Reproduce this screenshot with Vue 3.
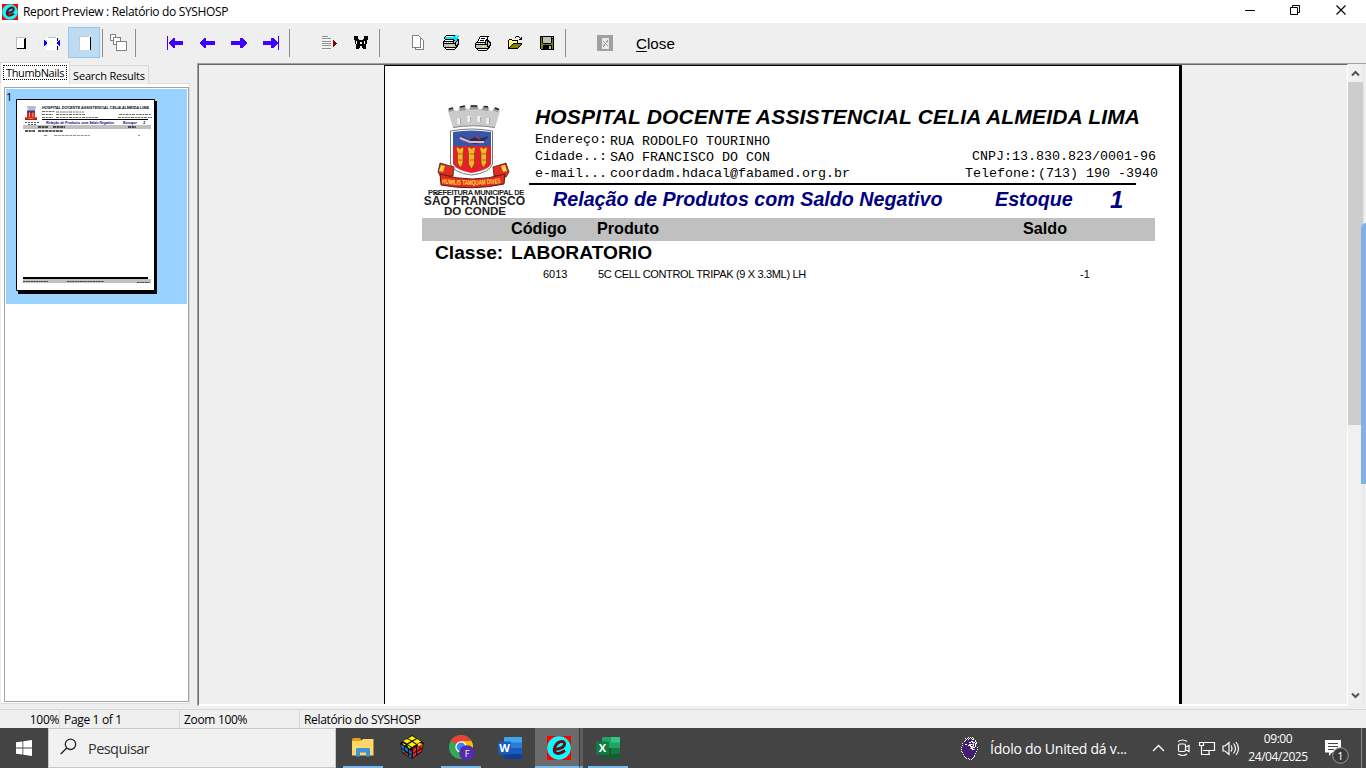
<script setup>
const palette = {
  k: '#000000', w: '#ffffff', g: '#c0c0c0', y: '#ffff00', o: '#808000',
  c: '#00e5ff', p: '#43206b', m: '#b9a8cf'
}

function pixels(rows) {
  const out = []
  rows.forEach((row, y) => {
    let x = 0
    while (x < row.length) {
      const ch = row[x]
      let n = 1
      while (row[x + n] === ch) n++
      if (ch !== '.') out.push({ x, y, w: n, fill: palette[ch] })
      x += n
    }
  })
  return out
}

const printer = pixels([
  '.....kkkkkkkkk..',
  '....kwwwwwwwk...',
  '....kwkkkkwwk...',
  '...kwwwwwwwkk...',
  '...kwkkkkwkkkk..',
  '..kwwwwwwwkgkkk.',
  '.kkkkkkkkkkgkgkk',
  'kgwgwgwgwgkgkggk',
  'kkkkkkkkkkkkkggk',
  'kgggggggggggkgkk',
  'kggggggyyyggkkk.',
  'kggggggggggggkk.',
  '.kkkkkkkkkkkkk..',
  '..kwwwwwwwwwk...',
  '...kkkkkkkkk....'
])
const printerSetup = pixels([
  '...kkkkkkkkkcc.c',
  '..kwwwwwwwccc.cc',
  '.kccccccccccccc.',
  '.kccccccccccccc.',
  '..kkkkkkkkkccckk',
  '.kwwwwwwwwkkcckk',
  'kkkkkkkkkkkgckgk',
  'kgwgwgwgwgkgkggk',
  'kkkkkkkkkkkkkggk',
  'kgggggggggggkgkk',
  'kggggggyyyggkkk.',
  'kggggggggggggkk.',
  '.kkkkkkkkkkkkk..',
  '..kwwwwwwwwwk...',
  '...kkkkkkkkk....'
])
const folder = pixels([
  '........kkk...',
  '.......k...k.k',
  '............kk',
  '.kkk.......kkk',
  'kywykkkkkk....',
  'kwywywywyk....',
  'kywywywywk....',
  'kwywykkkkkkkkk',
  'kywykooooooook',
  'kwykooooooook.',
  'kykooooooook..',
  'kkooooooook...',
  'kkkkkkkkkk....'
])
const floppy = pixels([
  'kkkkkkkkkkkkkk',
  'kokggggggggkgk',
  'kokggggggggkkk',
  'kokggggggggkok',
  'kokggggggggkok',
  'kokggggggggkok',
  'kokggggggggkok',
  'kookkkkkkkkook',
  'kooooooooooook',
  'kookkkkkkkkkok',
  'kookkkkkkggkok',
  'kookkkkkkggkok',
  'kookkkkkkggkok',
  '.kkkkkkkkkkkkk'
])
const binoculars = pixels([
  'kkkk......kkkk',
  'kkkk......kkkk',
  'kkkk......kkkk',
  'kkkkk....kkkkk',
  '.kkkkkkkkkkkk.',
  '.kwkkkkkkkwkk.',
  '.kwkkkwwkkwkk.',
  '.kwkkkwwkkwkk.',
  '..kkkkkkkkkk..',
  '..kkkkkkkkkk..',
  '..kkkk..kkkk..',
  '..kkkk..kkkk..',
  '..kkk....kkk..'
])
const lion = pixels([
  '.......w.w.w......',
  '....w.wpwpwpw.....',
  '.....wpwpppww.....',
  '....wpppppppppw...',
  '...wppppppwwppw...',
  '...pppppwwpwwwpw..',
  '.wppppppppppmpww..',
  '..ppwwppwwwmwpw...',
  '.wpppppwwwppwpw...',
  '.ppppppppwwwmpw...',
  'wpppppppppwmwwppw.',
  '.ppppppppmwwppp...',
  'wppppppppppwwmppw.',
  '.ppppppppppppppp..',
  'wppppppppppppppw..',
  '.wppppppppppppp...',
  '..ppppppppppppw...',
  '..wppppppppppp....',
  '...ppppppppppw....',
  '...wpppppppppw....',
  '....wpppppppw.....',
  '.....w.wpp.w......',
  '........w.w.......'
])

const contacts = [
  { label: 'Endereço:', value: 'RUA RODOLFO TOURINHO', rlabel: '', rvalue: '', kind: 'address' },
  { label: 'Cidade..:', value: 'SAO FRANCISCO DO CON', rlabel: 'CNPJ:', rvalue: '13.830.823/0001-96', kind: 'city' },
  { label: 'e-mail...', value: 'coordadm.hdacal@fabamed.org.br', rlabel: 'Telefone:', rvalue: '(713) 190 -3940', kind: 'mail' }
]
</script>

<template>
  <div class="screen">
    <header class="titlebar">
      <svg class="app-logo" width="16" height="16" viewBox="0 0 24 24">
        <rect width="24" height="24" fill="#f00" />
        <circle cx="12" cy="12" r="11.8" fill="#0ff" />
        <path d="M7 13C12 14 18 11 17.500 7.500C17 4 10.500 5 8 10.500C5.500 17 10 20 18 14.500" fill="none" stroke="#6b0c16" stroke-width="3.200" />
      </svg>
      <span class="title">Report Preview : Relatório do SYSHOSP</span>
      <svg class="win-buttons" width="106" height="16" viewBox="0 0 106 16">
        <path d="M0 8.500H10" stroke="#000" />
        <path d="M45.500 5.500H52.500V12.500H45.500ZM47.500 5V3.500H54.500V10.500H53" fill="none" stroke="#000" />
        <path d="M91.500 3.500L100.500 12.500M100.500 3.500L91.500 12.500" stroke="#000" stroke-width="1.100" />
      </svg>
    </header>

    <div class="toolbar">
      <div class="group first">
        <svg class="btn" viewBox="0 0 32 31"><path d="M12 10h9v12h-9z" fill="#c0c0c0" /><path d="M13 11h7v10h-7z" fill="#fff" /><path d="M20 12h1h0h1h-1v9h-8v1h8h1v-11h-1v10z" fill="#000" /><path d="M20 12h1v10h-8v-1h7zM21 12h1v10h-1z" fill="#000" /></svg>
        <svg class="btn" viewBox="0 0 32 31"><path d="M10 10h12v13h-12z" fill="#fff" /><path d="M12 10h8v1h-8zM10 13h1v6h-1z" fill="#c0c0c0" /><path d="M21 11h1v3h-1zM21 19h1v4h-1z" fill="#000" /><path d="M8 13v6l3.500-3zM24 13v6l-3.500-3z" fill="#00f" /></svg>
        <svg class="btn active" viewBox="0 0 32 31"><path d="M11 9h11v14h-11z" fill="#fff" /><path d="M11 9h10v1h-9v13h-1z" fill="#c8c8c8" /><path d="M22 10h1v13h-1z" fill="#000" /></svg>
      </div>
      <i class="sep s1"></i>
      <svg class="btn" viewBox="0 0 32 31"><g fill="#fff" stroke="#808080"><path d="M8.500 7.500h5v6h-5z" /><path d="M11.500 10.500h7v7h-7z" /><path d="M14.500 14.500h10v9h-10z" /></g></svg>
      <i class="sep"></i>
      <div class="group nav">
        <svg class="btn" viewBox="0 0 32 31"><path d="M8 9h1v14h-1zM9 16l5-5h2v3h8v4h-8v3h-2z" fill="#4000ff" /></svg>
        <svg class="btn" viewBox="0 0 32 31"><path d="M8 16l5-5h2v3h9v4h-9v3h-2z" fill="#4000ff" /></svg>
        <svg class="btn" viewBox="0 0 32 31"><path d="M24 16l-5-5h-2v3h-9v4h9v3h2z" fill="#4000ff" /></svg>
        <svg class="btn" viewBox="0 0 32 31"><path d="M23 9h1v14h-1zM23 16l-5-5h-2v3h-8v4h8v3h2z" fill="#4000ff" /></svg>
      </div>
      <i class="sep s2"></i>
      <div class="group tools">
        <svg class="btn" viewBox="0 0 32 31"><path d="M9 9.500h6M9 11.500h9M9 14.500h9M9 16.500h9M9 18.500h9M9 21.500h9" stroke="#909090" /><path d="M9 10.500h6M9 12.500h9M9 15.500h9M9 17.500h9M9 19.500h9M9 22.500h9" stroke="#fff" stroke-opacity=".5" /><path d="M20 13v7l4-3.500z" fill="#800000" /></svg>
        <svg class="btn" viewBox="-9 -9 32 31"><rect v-for="(p, i) in binoculars" :key="i" :x="p.x" :y="p.y" :width="p.w" height="1" :fill="p.fill" /></svg>
      </div>
      <i class="sep s2"></i>
      <div class="group files">
        <svg class="btn" viewBox="0 0 32 31"><path d="M12.500 11.500h6l2 2v9h-8z" fill="#fff" stroke="#808080" /><path d="M9.500 8.500h6l2 2v9.500h-8z" fill="#fff" stroke="#808080" /></svg>
        <svg class="btn" viewBox="-8 -8 32 31"><rect v-for="(p, i) in printerSetup" :key="i" :x="p.x" :y="p.y" :width="p.w" height="1" :fill="p.fill" /></svg>
        <svg class="btn" viewBox="-8 -9 32 31"><rect v-for="(p, i) in printer" :key="i" :x="p.x" :y="p.y" :width="p.w" height="1" :fill="p.fill" /></svg>
        <svg class="btn" viewBox="-9 -9 32 31"><rect v-for="(p, i) in folder" :key="i" :x="p.x" :y="p.y" :width="p.w" height="1" :fill="p.fill" /></svg>
        <svg class="btn" viewBox="-9 -9 32 31"><rect v-for="(p, i) in floppy" :key="i" :x="p.x" :y="p.y" :width="p.w" height="1" :fill="p.fill" /></svg>
      </div>
      <i class="sep s2"></i>
      <div class="group tools">
        <svg class="btn" viewBox="0 0 32 31"><path d="M8 8h16v16H8z" fill="#a0a0a0" /><path d="M13 11h7v11h-7z" fill="#e8e8e8" /><path d="M14 20l5-7M14 14l5 5" fill="none" stroke="#a0a0a0" /></svg>
      </div>
      <span class="close"><u>C</u>lose</span>
    </div>

    <main class="body">
      <aside class="side">
        <div class="tabs">
          <div class="tab on"><span>ThumbNails</span></div>
          <div class="tab"><span>Search Results</span></div>
        </div>
        <div class="tabpage">
          <div class="list">
            <div class="item">
              <span class="num">1</span>
              <svg class="thumb" width="141" height="195" viewBox="0 0 141 195">
                <path d="M2 2h139v193H2z" fill="#000" />
                <path d="M.500 .500h138v191H.500z" fill="#fff" stroke="#000" />
                <path d="M11 7h9l-1 5h-7z" fill="#bbb" />
                <path d="M11 11.500h8v3h-8z" fill="#2b3fa0" />
                <path d="M11 14h8v5h-8z" fill="#e02020" />
                <path d="M13.500 13.500v4.500M17 13.500v4.500" stroke="#f4c030" />
                <path d="M9 18q6 3 12 0v3H9z" fill="#b01818" />
                <path d="M9 23.500h14M12 25.500h8" stroke="#555" stroke-dasharray="2 1" />
                <text x="26" y="10.300" textLength="107" lengthAdjust="spacingAndGlyphs" class="th-title">HOSPITAL DOCENTE ASSISTENCIAL CELIA ALMEIDA LIMA</text>
                <path d="M26 12.500h13M40 13h28M26 15.500h11M40 15.500h29M103 15.500h32M26 18.500h11M40 18.500h43M102 18.500h34" stroke="#444" stroke-width=".8" stroke-dasharray="3 .8 2 .7" />
                <path d="M26 20.500h106" stroke="#000" />
                <text x="30" y="24.500" textLength="68" lengthAdjust="spacingAndGlyphs" class="th-sub">Relação de Produtos com Saldo Negativo</text>
                <text x="107" y="24.500" textLength="14" lengthAdjust="spacingAndGlyphs" class="th-sub">Estoque</text>
                <text x="127" y="24.500" class="th-sub">1</text>
                <path d="M7 26h128v4H7z" fill="#c0c0c0" />
                <path d="M22 28h10M37 28h12M112 28h8" stroke="#222" stroke-width="1.500" stroke-dasharray="3 .6" />
                <path d="M9 32h10M22 32h25" stroke="#222" stroke-width="1.500" stroke-dasharray="3 .6" />
                <path d="M28 36.500h4M38 36.500h36M122 36.500h2" stroke="#777" stroke-width=".8" stroke-dasharray="3 .8" />
                <path d="M7 178h125v2H7z" fill="#000" />
                <path d="M7 180h128v4H7z" fill="#c0c0c0" />
                <path d="M7 182.500h25M51 182.500h37M121 183.500h13" stroke="#444" stroke-dasharray="2 .6" />
              </svg>
            </div>
          </div>
        </div>
      </aside>

      <section class="viewer">
        <div class="canvas">
          <article class="page">
            <div class="head">
              <figure class="crest">
                <svg width="104" height="84" viewBox="0 0 104 84">
                  <path d="M26 6l4-2 5 2 5-4 5 2 7-2 7 2 5-2 5 4 5-2 4 2-5 17q-21-4-42 0z" fill="#cbcbcb" />
                  <path d="M26 4l5-1.500 1 3-5 1.500zM37 2l6-1 1 4-6 1zM48 .500h8v4h-8zM61 1l6 1-1 4-6-1zM72 2.500l5 1.500-1 3-5-1.500z" fill="#999" />
                  <path d="M27 4l4-1M38 2l5-1M49 1h6M62 1.500l4 .5M73 3l4 1.500" stroke="#222" stroke-width="1.500" />
                  <path d="M37 13v6M47 11v6M57 11v6M66 13v6" stroke="#eee" stroke-width="3.500" />
                  <path d="M38.500 13v6M48.500 12v5M58.500 12v5M67.500 13v6" stroke="#aaa" />
                  <path d="M31 22.500q20-3.500 42 0" stroke="#8a8a8a" fill="none" />
                  <path d="M28.500 26q21-4 42 0v33q-3 9-21 11-18-2-21-11z" fill="#fff" stroke="#777" />
                  <path d="M31 27q18-3 38 0v15H31z" fill="#3a55a8" />
                  <path d="M31 41h38v18q-2 6-20 9-15-3-18-9z" fill="#e5202b" />
                  <path d="M37 29l10 6 6-3 7 1 7-2-6 6-8 2-5-1z" fill="#2d2a55" />
                  <path d="M38 33l10 4 14 0" stroke="#e6b5c2" stroke-width="2" fill="none" />
                  <path d="M53 31l5 3" stroke="#9a4050" stroke-width="1.500" />
                  <g fill="#f6b525" stroke="#853b16" stroke-width=".7">
                    <path d="M34 43l2-1 2 2 2-2 2 1-1 5 0 10-2.500 5-3-5 0-10z" />
                    <path d="M45.500 43l2-1 2 2 2-2 2 1-1 5 0 11-3 5-3-5 0-11z" />
                    <path d="M57.500 43l2-1 2 2 2-2 2 1-1 5 0 10-3 5-2.500-5 0-10z" />
                  </g>
                  <path d="M36 49h4M36 55h4M48 49h4M48 55h4M60 49h4M60 55h4" stroke="#b26510" />
                  <path d="M18 58l14 4-1 9-12 1-3-5z" fill="#e32b21" stroke="#3a2a10" stroke-width=".8" />
                  <path d="M84 58l-13 4 1 9 12 1 3-5z" fill="#e32b21" stroke="#3a2a10" stroke-width=".8" />
                  <path d="M19 60l4 1-2 6-4-1zM83 60l-4 1 2 6 4-1z" fill="#f2d84a" />
                  <path d="M18 69q32 10 65 0l-1 10q-32 7-63 1z" fill="#e8281c" stroke="#5c1a10" />
                  <path id="motto" d="M20 78.500q31 3.500 62 -1" fill="none" />
                  <text class="motto"><textPath href="#motto" textLength="59" lengthAdjust="spacingAndGlyphs">HUMILIS TAMQUAM DIVES</textPath></text>
                </svg>
                <figcaption>
                  <span class="cap-a">PREFEITURA MUNICIPAL DE</span>
                  <span class="cap-b">SÃO FRANCISCO</span>
                  <span class="cap-c">DO CONDE</span>
                </figcaption>
              </figure>
              <div class="info">
                <h1>HOSPITAL DOCENTE ASSISTENCIAL CELIA ALMEIDA LIMA</h1>
                <div v-for="c in contacts" :key="c.kind" class="row" :class="c.kind">
                  <span class="lab">{{ c.label }}</span>
                  <span class="val">{{ c.value }}</span>
                  <span class="rlab">{{ c.rlabel }}</span>
                  <span class="rval">{{ c.rvalue }}</span>
                </div>
                <div class="rule"></div>
                <div class="subtitle">
                  <span class="rel">Relação de Produtos com Saldo Negativo</span>
                  <span class="est">Estoque</span>
                  <span class="one">1</span>
                </div>
              </div>
            </div>
            <div class="cols band"><b>Código</b><b>Produto</b><b>Saldo</b></div>
            <div class="classe"><b>Classe:</b><b>LABORATORIO</b></div>
            <div class="cols detail"><span>6013</span><span>5C CELL CONTROL TRIPAK (9 X 3.3ML) LH</span><span>-1</span></div>
          </article>
        </div>
        <div class="scroll">
          <svg width="15" height="17" viewBox="0 0 15 17"><path d="M4 10.500l3.500-3.500 3.500 3.500" fill="none" stroke="#555" stroke-width="2" /></svg>
          <div class="grip"></div>
          <svg class="down" width="15" height="17" viewBox="0 0 15 17"><path d="M4 6.500l3.500 3.500 3.500-3.500" fill="none" stroke="#555" stroke-width="2" /></svg>
        </div>
        <div class="edge"></div>
      </section>
    </main>

    <footer class="status">
      <span class="st pct">100%</span><span class="st pg">Page 1 of 1</span><span class="st zm">Zoom 100%</span><span class="st nm">Relatório do SYSHOSP</span>
    </footer>

    <nav class="taskbar">
      <div class="start"><svg width="16" height="16" viewBox="0 0 16 16"><path d="M0 2.300l6.500-.9v6.100H0zM7.300 1.300L16 0v7.500H7.300zM0 8.400h6.500v6.200L0 13.700zM7.300 8.400H16V16l-8.700-1.300z" fill="#fff" /></svg></div>
      <div class="search">
        <svg width="17" height="17" viewBox="0 0 17 17"><circle cx="10.500" cy="6.300" r="5.200" fill="none" stroke="#222" stroke-width="1.300" /><path d="M6.700 10L.700 16" stroke="#222" stroke-width="1.300" /></svg>
        <span>Pesquisar</span>
      </div>
      <div class="app open explorer"><svg width="22" height="20" viewBox="0 0 22 20"><path d="M0 1.500q0-1.500 1.500-1.500H8l2 3H0z" fill="#e6a117" /><path d="M0 3h9l2-2h10.500v16.500H0z" fill="#fdd768" /><path d="M4 18.500v-7q0-1.500 1.500-1.500h11q1.500 0 1.500 1.500v7h-4v-4H8v4z" fill="#3b93dc" /></svg></div>
      <div class="app cube"><svg width="24" height="24" viewBox="0 0 24 24"><path d="M12 0l12 8-2 9-10 7L2 18 0 8z" fill="#111" /><g fill="#ffee00"><path d="M12 1l4 2.500-4 2-4-2zM7 4l4 2-4 2.500-4-2.500zM17 4l4 2.500-4 2.500-4-2.500zM12 7l4 2.500-4 2.500-4-2.500zM17.500 9.500l2-1.500 3 1-4 3zM2.500 8L6 9.500 4 10.500zM7 10l4 2.500-2 1z" /></g><g fill="#1776bd"><path d="M1 9.500l3 2v3l-2.500-2zM5 12l3 2v3l-3-2zM2 14l2.500 2v2.500L2.500 17zM9 19l2.500 1.500V23L9 21.500z" /></g><g fill="#ef2020"><path d="M13 14l3-2v4l-3 2zM17 12l2.500-2v4L17 16zM20.500 10l2.500-1-.5 3.500-2 1zM13 19l3-2v3l-3 2.500zM17 17l5-3-.5 2.500L17 19z" /></g><path d="M9 15l2.500 1.500v3L9 18z" fill="#1776bd" /><path d="M5 17l3 2v2l-3-2z" fill="#cf2020" /></svg></div>
      <div class="app open chrome"><svg width="27" height="26" viewBox="0 0 27 26"><circle cx="12" cy="12" r="12" fill="#34a853" /><path d="M12 12L1.600 6A12 12 0 0 1 22.400 6z" fill="#ea4335" /><path d="M12 6h10.400A12 12 0 0 1 12 24l5.500-9z" fill="#fbbc05" /><circle cx="12" cy="12" r="5.700" fill="#fff" /><circle cx="12" cy="12" r="4.400" fill="#3b82f0" /><circle cx="18" cy="18" r="7.800" fill="#512da8" /><text x="18" y="21.800" class="avatar">F</text></svg></div>
      <div class="app word"><svg width="24" height="22" viewBox="0 0 24 22"><rect x="6" width="18" height="22" rx="1" fill="#41a5ee" /><path d="M6 5.500h18v5.500H6z" fill="#2b7cd3" /><path d="M6 11h18v5.500H6z" fill="#185abd" /><path d="M6 16.500h18V21q0 1-1 1H7q-1 0-1-1z" fill="#103f91" /><rect y="4.500" width="13" height="13" rx="1" fill="#185abd" /><text x="6.500" y="15" class="office">W</text></svg></div>
      <div class="app open current"><svg width="24" height="24" viewBox="0 0 24 24"><rect width="24" height="24" fill="#f00" /><circle cx="12" cy="12" r="11.800" fill="#0ff" /><path d="M7 13C12 14 18 11 17.500 7.500C17 4 10.500 5 8 10.500C5.500 17 10 20 18 14.500" fill="none" stroke="#6b0c16" stroke-width="3" /></svg></div>
      <div class="stack"></div>
      <div class="app open excel"><svg width="24" height="22" viewBox="0 0 24 22"><rect x="6" width="18" height="22" rx="1" fill="#21a366" /><path d="M15 0h8q1 0 1 1v4.500h-9z" fill="#33c481" /><path d="M6 11h9v11H7q-1 0-1-1z" fill="#185c37" /><path d="M15 11h9v5.500h-9z" fill="#107c41" /><path d="M15 16.500h9V21q0 1-1 1h-8z" fill="#185c37" /><rect y="4.500" width="13" height="13" rx="1" fill="#107c41" /><text x="6.500" y="15" class="office">X</text></svg></div>

      <div class="news">
        <svg width="18" height="23" viewBox="0 0 18 23" shape-rendering="crispEdges"><rect v-for="(p, i) in lion" :key="i" :x="p.x" :y="p.y" :width="p.w" height="1" :fill="p.fill" /></svg>
        <span>Ídolo do United dá v...</span>
      </div>
      <div class="tray">
        <svg width="88" height="18" viewBox="0 0 88 18" fill="none" stroke="#fff" stroke-width="1.200">
          <path d="M1 12l5.500-5.500L12 12" stroke-width="1.400" />
          <path d="M26 2.500q5-3 9 0M26 15q5 3 9 0" /><rect x="26.500" y="5" width="7" height="7.500" rx="1.500" /><path d="M34 8l3-1.500v6L34 11" />
          <path d="M52 3.500h10.500v8H51M47.500 3.500h4v3h-4zM49.500 7v8.500M49 15.500h9M57 12v3.500" />
          <path d="M71 7v5h2l4 3.500v-12L73 7zM79 6.500q2 3 0 6M81.500 4.500q4 5 0 10M84 3q5 6.500 0 13" />
        </svg>
      </div>
      <div class="clock"><span>09:00</span><span>24/04/2025</span></div>
      <svg class="notes" width="25" height="26" viewBox="0 0 25 26"><path d="M0 1h16v12.500h-9L4 17v-3.500H0z" fill="#fff" /><path d="M3 4.500h10M3 7.500h10M3 10.500h6" stroke="#444" stroke-width="1.200" /><circle cx="15.500" cy="16.500" r="7.800" fill="#3b3b3b" stroke="#999" /><text x="15.500" y="20.500" class="badge">1</text></svg>
      <i class="peek"></i>
    </nav>
  </div>
</template>

<style>
html, body { margin: 0; overflow: hidden; }
</style>

<style scoped>
.screen {
  width: 1366px; height: 768px; display: flex; flex-direction: column; overflow: hidden;
  background: #efefef; color: #000; font-family: "Open Sans", "Noto Sans", sans-serif; font-size: 12px;
}
.screen svg { display: block; flex: none; }

.titlebar { height: 23px; flex: none; display: flex; align-items: center; background: #fff; padding-left: 2px; }
.title { margin-left: 5px; line-height: 22px; letter-spacing: -.33px; white-space: nowrap; }
.win-buttons { margin-left: auto; margin-right: 15px; margin-top: -3px; }

.toolbar { height: 40px; flex: none; display: flex; padding-top: 4px; box-sizing: border-box; }
.group { display: flex; }
.group.first { margin-left: 4px; }
.btn { width: 32px; height: 31px; shape-rendering: crispEdges; }
.btn.active { background: #bfdbf2; box-shadow: inset 0 0 0 1px #90c8f6; }
.sep { width: 1px; height: 28px; margin: 2px 0 0 1px; background: #8c8c8c; }
.sep.s1 { margin-left: 2px; margin-right: -1px; }
.sep.s2 { margin-left: 2px; }
.nav, .tools, .files { margin-left: 23px; }
.close { margin-left: 15px; line-height: 34px; font-family: "Liberation Sans", Arial, sans-serif; font-size: 15.200px; }
.close u { text-underline-offset: 2px; }

.body { height: 643px; flex: none; display: flex; }
.side { width: 197px; flex: none; display: flex; flex-direction: column; }
.tabs { height: 21px; flex: none; display: flex; align-items: flex-end; position: relative; z-index: 1; }
.tab { height: 18px; width: 78px; background: #f0f0f0; border: 1px solid #d9d9d9; border-bottom: 0; line-height: 19px; text-align: center; font-size: 11px; letter-spacing: -.2px; white-space: nowrap; margin-left: -1px; }
.tab.on { width: 68px; height: 21px; margin-left: 0; background: #fff; letter-spacing: -.35px; }
.tab.on span { display: block; height: 13px; margin: 2px 2px 0; border: 1px dotted #000; line-height: 13px; }
.tabpage { width: 190px; height: 621px; margin-top: -1px; box-sizing: border-box; border: 1px solid #dcdcdc; border-left-color: #efefef; background: #fff; padding: 3px; }
.list { height: 613px; width: 183px; border: 1px solid #a0a4a8; background: #fff; }
.item { margin: 1px; height: 215px; background: #99d1ff; display: flex; }
.num { width: 10px; flex: none; line-height: 15px; font-size: 11px; }
.thumb { margin-top: 10px; }
.th-title { font: italic bold 4.300px "Liberation Sans", sans-serif; }
.th-sub { font: italic bold 4px "Liberation Sans", sans-serif; fill: #000080; }

.viewer { flex: 1; display: flex; position: relative; border-top: 1px solid #a0a0a0; border-left: 1px solid #a0a0a0; box-sizing: border-box; }
.canvas { width: 1148px; flex: none; border-top: 1px solid #696969; border-left: 1px solid #696969; border-right: 1px solid #fff; border-bottom: 2px solid #fff; height: 639px; overflow: hidden; }
.page { width: 794px; height: 638px; margin-left: 185px; border: 1px solid #000; border-width: 1px 3px 0 1px; background: #fff; font-family: "Liberation Sans", Arial, sans-serif; }
.head { display: flex; height: 152px; }
.crest { width: 104px; margin: 39px 0 0 37px; flex: none; }
.crest figcaption { display: flex; flex-direction: column; align-items: center; font-weight: bold; color: #222; white-space: nowrap; margin-left: 1px; }
.motto { font: bold 7px "Liberation Sans", sans-serif; fill: #fbe04a; }
.cap-a { font-size: 7.500px; line-height: 7px; letter-spacing: -.32px; margin-left: 3px; }
.cap-b { font-size: 12px; line-height: 10px; letter-spacing: .05px; }
.cap-c { font-size: 11.500px; line-height: 10px; margin-left: 1px; }
.info { margin: 39px 0 0 3px; width: 640px; flex: none; }
h1 { margin: 0 0 2px 6px; font-size: 21px; line-height: 24px; font-style: italic; white-space: nowrap; letter-spacing: .18px; }
.row { height: 17px; margin-left: 6px; display: flex; font: 13.333px/17px "Liberation Mono", "Courier New", monospace; white-space: pre; }
.lab { width: 75px; }
.val { width: 280px; }
.address .val { padding-top: 2px; }
.city .val { padding-top: 1px; }
.rlab { width: 148px; text-align: right; margin-left: -1px; }
.rval { margin-left: 1px; }
.city .rlab { margin-left: -26px; }
.city .rval { margin-left: 0; }
.rule { height: 2px; width: 607px; margin-top: 1px; background: #000; }
.subtitle { display: flex; height: 29px; line-height: 29px; align-items: center; color: #000080; font-weight: bold; font-style: italic; font-size: 19.700px; white-space: nowrap; }
.rel { width: 442px; margin-left: 24px; }
.est { width: 115px; }
.one { font-size: 24px; }
.cols { margin-left: 37px; width: 733px; display: flex; white-space: nowrap; }
.band { height: 23px; line-height: 21px; background: #c0c0c0; font-size: 16.200px; }
.band b:nth-child(1) { margin-left: 89px; width: 86px; }
.band b:nth-child(2) { width: 426px; }
.classe { display: flex; height: 24px; line-height: 23px; font-size: 19.200px; margin-left: 50px; }
.classe b:first-child { width: 76px; }
.detail { font-size: 11px; height: 18px; line-height: 18px; }
.detail span:nth-child(1) { margin-left: 121px; width: 55px; }
.detail span:nth-child(2) { width: 482px; letter-spacing: -.33px; }
.scroll { width: 15px; height: 639px; margin-top: 1px; display: flex; flex-direction: column; background: #f0f0f0; border-right: 1px solid #e3e3e3; }
.grip { height: 343px; background: #cdcdcd; }
.down { margin-top: auto; }
.edge { position: absolute; right: 0; top: 159px; width: 5px; height: 261px; background: #82b1e8; border-radius: 5px 0 0 0; }

.status { height: 22px; flex: none; display: flex; box-sizing: border-box; padding-top: 3px; line-height: 20px; letter-spacing: -.33px; white-space: nowrap; }
.st { box-sizing: border-box; height: 19px; border-top: 1px solid #d7d7d7; border-left: 1px solid #d7d7d7; padding-left: 4px; }
.pct { width: 59px; text-align: right; border-left: 0; padding: 0; }
.pg { width: 120px; }
.zm { width: 120px; }
.nm { flex: 1; }

.taskbar { height: 40px; flex: none; display: flex; background: #444; color: #fff; }
.start { width: 48px; display: flex; align-items: center; justify-content: center; }
.search { width: 286px; border: 1px solid #c8c8c8; background: #f1f1f1; display: flex; align-items: center; color: #333; }
.search svg { margin-left: 11px; margin-top: -3px; }
.search span { margin-left: 11px; font-size: 14.500px; letter-spacing: -.55px; }
.app { width: 40px; height: 40px; display: flex; align-items: center; justify-content: center; box-sizing: border-box; border-bottom: 2px solid transparent; flex: none; }
.open { border-bottom-color: #76b9ed; }
.explorer { margin-left: 7px; }
.explorer svg, .word svg, .excel svg { margin-top: 2px; }
.chrome svg { margin: 2px 0 0 2px; }
.cube, .word { margin: 0 9px; }
.word { margin-right: 5px; }
.current { width: 44px; background: #6b6b6b; }
.current svg { margin-left: 3px; margin-top: 2px; }
.stack { width: 4px; margin-right: 5px; background: #5c5c5c; box-sizing: border-box; border-left: 1px solid #3b3b3b; border-bottom: 2px solid #68a4d3; }
.avatar { font: 9px "Open Sans", sans-serif; fill: #fff; text-anchor: middle; }
.office { font: bold 11px "Open Sans", sans-serif; fill: #fff; text-anchor: middle; }
.news { margin-left: 333px; width: 183px; display: flex; align-items: center; white-space: nowrap; font-size: 14px; letter-spacing: -.25px; }
.news span { margin-left: 11px; }
.tray { margin-left: 8px; display: flex; align-items: center; }
.clock { width: 64px; margin-left: 6px; display: flex; flex-direction: column; align-items: center; line-height: 18px; padding-top: 2px; letter-spacing: -.42px; white-space: nowrap; }
.notes { margin: 11px 0 0 15px; }
.badge { font: 11px "Open Sans", sans-serif; fill: #fff; text-anchor: middle; }
.peek { width: 1px; background: #8a8a8a; margin-left: auto; margin-right: 4px; }
</style>
